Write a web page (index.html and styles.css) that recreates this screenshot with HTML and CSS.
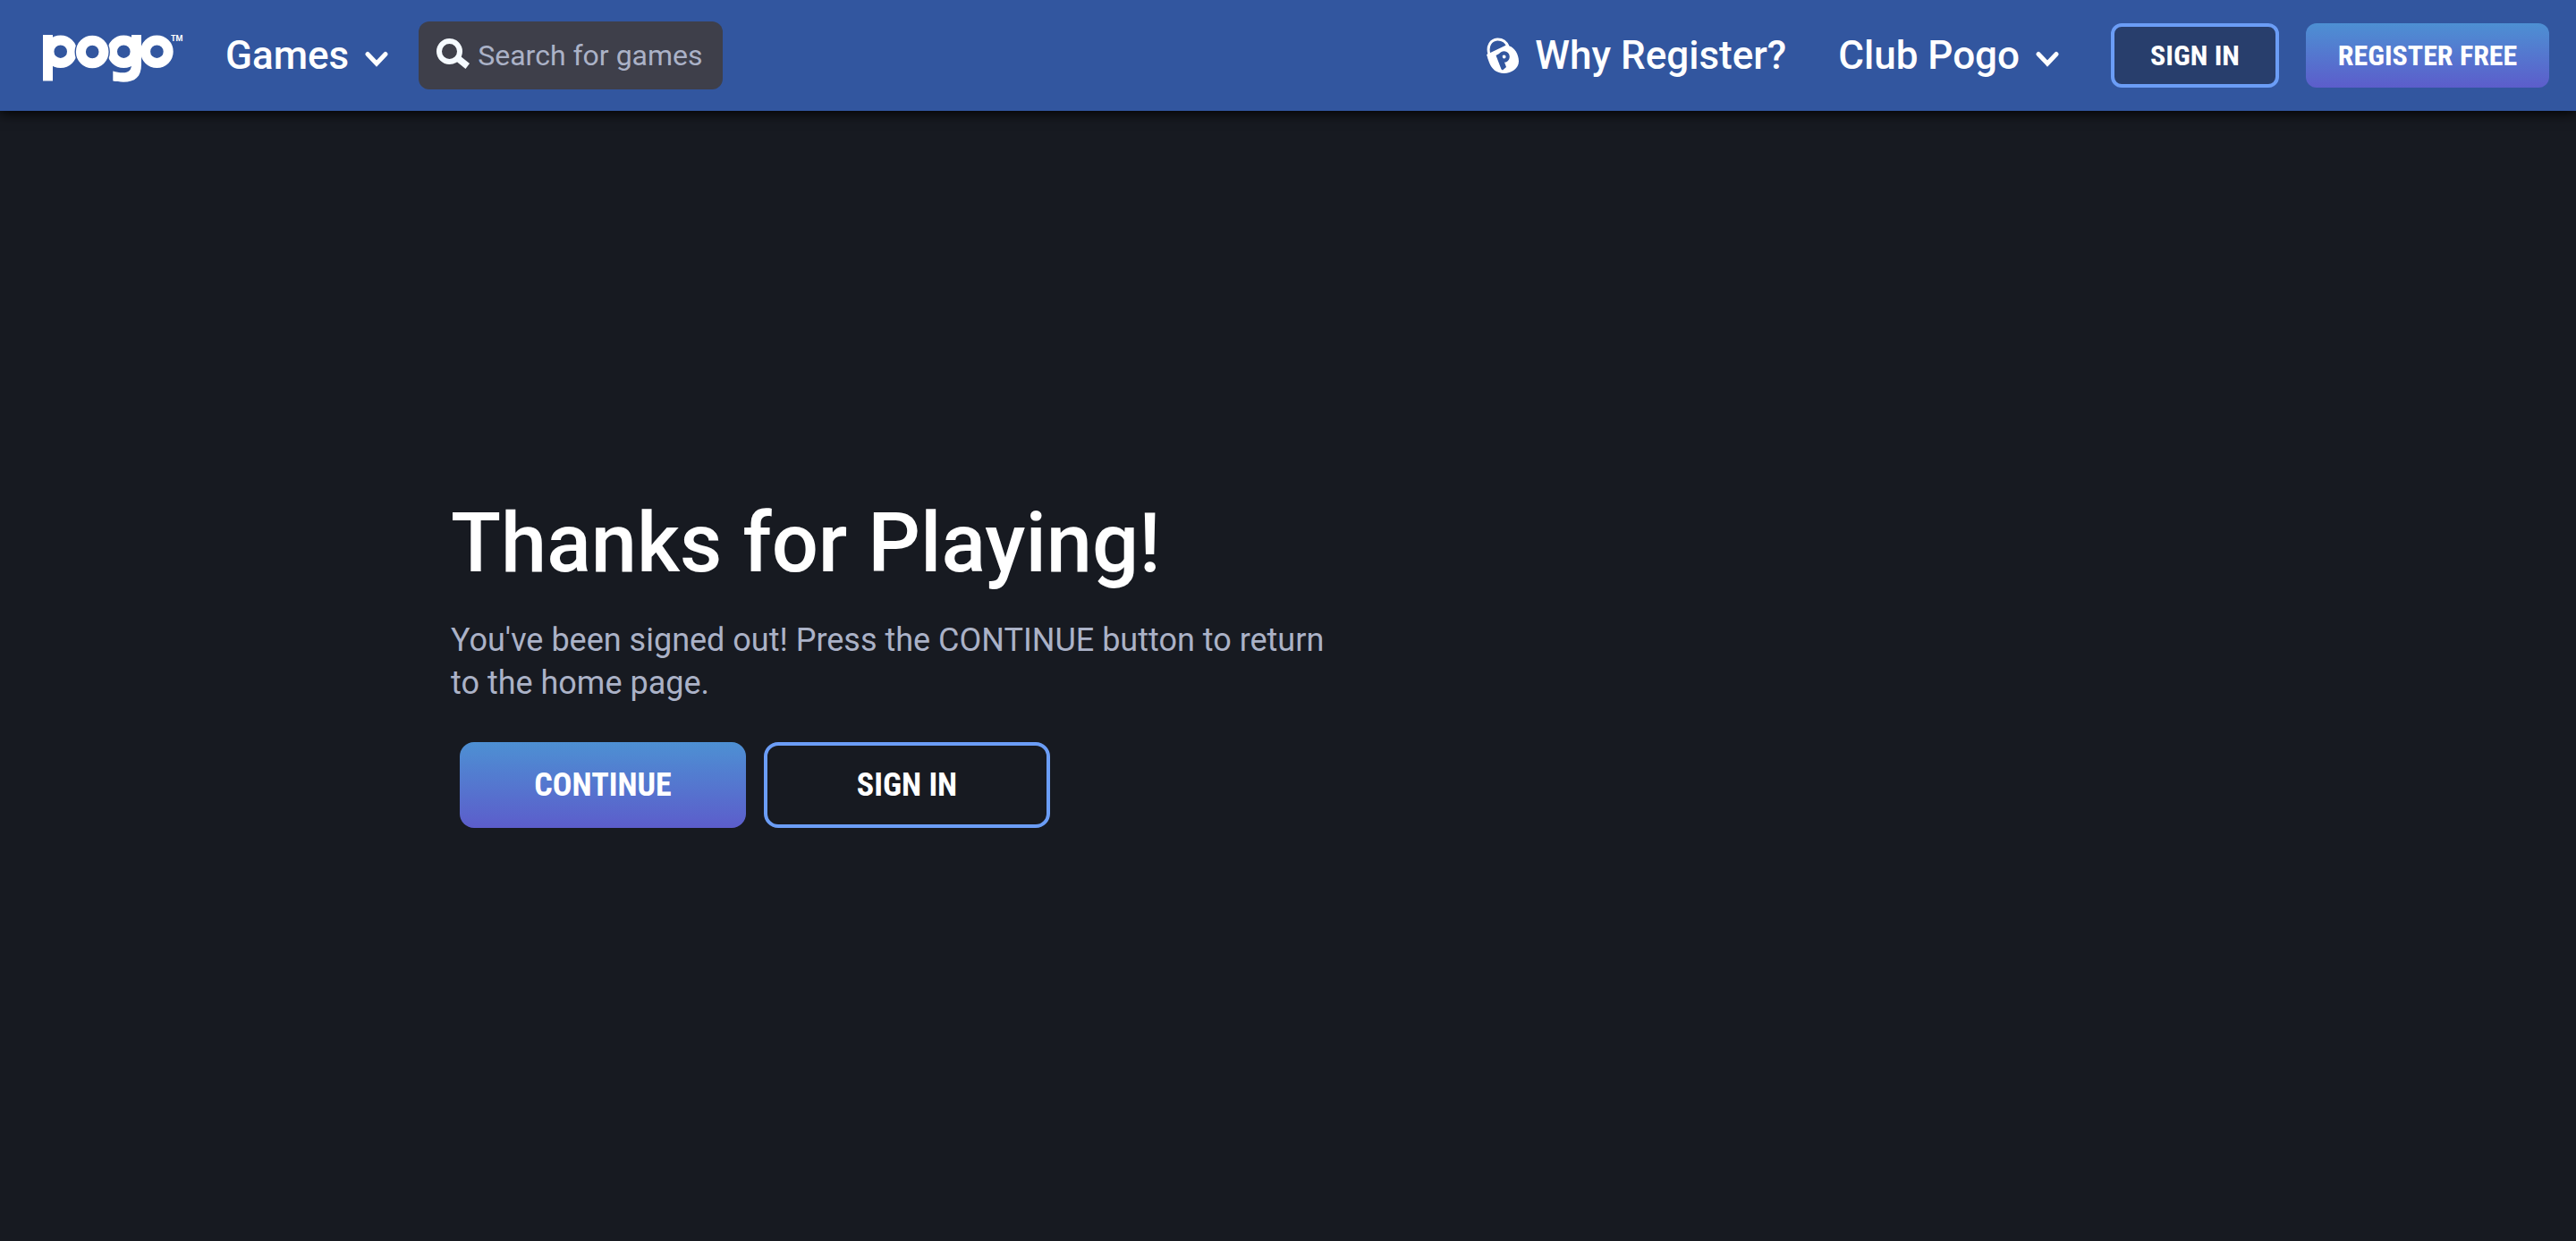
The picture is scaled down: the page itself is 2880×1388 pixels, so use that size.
FILE: index.html
```html
<!DOCTYPE html>
<html lang="en">
<head>
  <meta charset="utf-8">
  <meta name="viewport" content="width=device-width, initial-scale=1">
  <title>Pogo</title>
  <link rel="stylesheet" href="styles.css">
</head>
<body>
  <header class="site-header">
    <a class="logo" href="#" aria-label="Pogo home">
      <svg class="logo-mark" viewBox="48 35 160 60" aria-hidden="true">
        <g fill="none" stroke="#fff" stroke-width="11">
          <circle cx="67.7" cy="57.7" r="12.8"/>
          <circle cx="138.3" cy="57.7" r="12.8"/>
          <circle cx="175.4" cy="57.7" r="12.8"/>
        </g>
        <rect x="48" y="39" width="11" height="51.5" fill="#fff"/>
        <rect x="147" y="39" width="11" height="34" fill="#fff"/>
        <path d="M158 72c0 14-7 19.700-20 19.700-4.500 0-8.500-.4-11.700-1.200V79.500c3.500 1.200 7 1.800 11 1.800 6.700 0 9.700-3 9.700-9.300z" fill="#fff"/>
        <circle cx="103.2" cy="58" r="19.700" fill="#32569f"/>
        <circle cx="103.2" cy="58" r="12.8" fill="none" stroke="#fff" stroke-width="11"/>
        <text class="logo-tm" x="191" y="46">TM</text>
      </svg>
    </a>
    <a class="nav-link nav-games" href="#">Games
      <svg class="chevron" viewBox="0 0 26 18" aria-hidden="true"><path d="M3 3.500 13 14 23 3.500"/></svg>
    </a>
    <label class="search">
      <svg class="search-icon" viewBox="0 0 38 34" aria-hidden="true">
        <circle cx="14.500" cy="14.500" r="11.500" fill="none" stroke="#f5faff" stroke-width="6"/>
        <path d="M22 25.500 27 20 37 28 32.500 34z" fill="#f5faff"/>
      </svg>
      <input class="search-input" type="search" placeholder="Search for games" aria-label="Search for games">
    </label>
    <nav class="account-nav">
      <a class="nav-link nav-why" href="#">
        <svg class="padlock" viewBox="0 0 36 40" aria-hidden="true">
          <path d="M3 19C0 9 5 2.500 12 2c6-.2 10 3 12 8" fill="none" stroke="#fff" stroke-width="3"/>
          <path d="M0 19 24 7.500l1.500 2c5.500 1.500 10.500 9 10.500 17 0 8-8 13.500-16.500 13.500C11 40 5.500 35 3 28 2 25 1 23 1 22z" fill="#fff"/>
          <path d="M10.500 20 16 17 22 33 18 36.500 16.500 35.500z" fill="#32569f"/>
          <circle cx="19.500" cy="21.500" r="4.200" fill="none" stroke="#32569f" stroke-width="4.200"/>
        </svg>
        Why Register?
      </a>
      <a class="nav-link nav-club" href="#">Club Pogo
        <svg class="chevron" viewBox="0 0 26 18" aria-hidden="true"><path d="M3 3.500 13 14 23 3.500"/></svg>
      </a>
      <button class="button button-small button-outline" type="button">SIGN IN</button>
      <button class="button button-small button-wide button-primary" type="button">REGISTER FREE</button>
    </nav>
  </header>
  <main class="signed-out">
    <h1 class="title">Thanks for Playing!</h1>
    <p class="message">You've been signed out! Press the CONTINUE button to return to the home page.</p>
    <div class="actions">
      <button class="button button-large button-primary" type="button">CONTINUE</button>
      <button class="button button-large button-outline" type="button">SIGN IN</button>
    </div>
  </main>
</body>
</html>
```
FILE: styles.css
```css
* {
  box-sizing: border-box;
}

body {
  margin: 0;
  min-height: 100vh;
  background: #171a21;
  color: #fff;
  font-family: Roboto, sans-serif;
}

.site-header {
  display: flex;
  align-items: center;
  height: 124px;
  padding: 0 30px 0 48px;
  background: #32569f;
  box-shadow: 0 2px 14px #000;
}

.logo {
  display: flex;
  margin: 6px 44px 0 0;
}

.logo-mark {
  width: 160px;
  height: 60px;
}

.logo-tm {
  fill: #fff;
  font-size: 9px;
  font-weight: 700;
}

.nav-link {
  display: flex;
  align-items: center;
  color: #fff;
  font-size: 44px;
  font-weight: 500;
  line-height: 52px;
  text-decoration: none;
  white-space: nowrap;
}

.chevron {
  width: 26px;
  height: 18px;
  margin: 8px 0 0 18px;
  fill: none;
  stroke: #fff;
  stroke-width: 5px;
  stroke-linecap: round;
}

.nav-games {
  margin-right: 34px;
}

.search {
  display: flex;
  align-items: center;
  gap: 8px;
  width: 340px;
  height: 76px;
  padding: 0 12px 0 20px;
  border-radius: 12px;
  background: #3e3f4a;
}

.search-icon {
  flex: none;
  width: 38px;
  height: 34px;
  margin-bottom: 4px;
}

.search-input {
  flex: 1;
  min-width: 0;
  padding: 0;
  border: 0;
  outline: 0;
  appearance: none;
  background: none;
  color: #fff;
  font: 400 32px/40px Roboto, sans-serif;
}

.search-input::-webkit-search-cancel-button {
  display: none;
}

.search-input::placeholder {
  color: #abb2c7;
  opacity: 1;
}

.account-nav {
  display: flex;
  align-items: center;
  margin-left: auto;
}

.padlock {
  width: 36px;
  height: 40px;
  margin-right: 18px;
}

.nav-club {
  margin: 0 58px;
}

.button {
  padding: 0;
  border: 0;
  border-radius: 12px;
  background: none;
  color: #fff;
  font-family: "Roboto Condensed", "Liberation Sans Narrow", sans-serif;
  font-weight: 700;
}

.button-small {
  width: 188px;
  height: 72px;
  font-size: 32px;
}

.button-wide {
  width: 272px;
  margin-left: 30px;
}

.button-large {
  width: 320px;
  height: 96px;
  border-radius: 16px;
  font-size: 36px;
}

.button-outline {
  border: 4px solid #6b9df6;
}

.site-header .button-outline {
  background: #283e6c;
}

.button-primary {
  background: linear-gradient(#4d90d3, #5c5dcb);
}

.signed-out {
  width: 35%;
  margin-left: 17.5%;
  padding-top: 428px;
}

.title {
  margin: 0;
  font-size: 92px;
  font-weight: 500;
  line-height: 112px;
  white-space: nowrap;
}

.message {
  margin: 28px 0 0;
  color: #abb2c7;
  font-size: 36px;
  line-height: 48px;
}

.actions {
  display: flex;
  gap: 20px;
  padding: 42px 10px 0;
}
```
